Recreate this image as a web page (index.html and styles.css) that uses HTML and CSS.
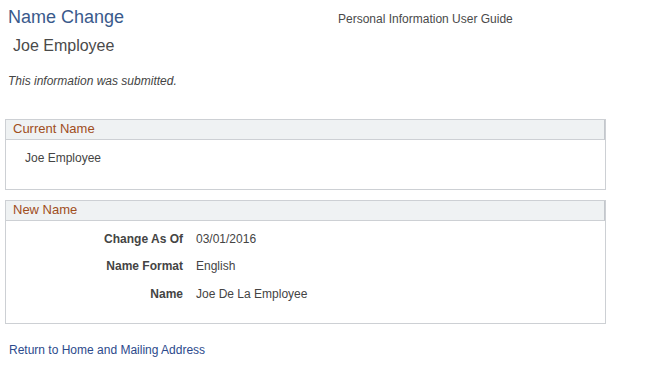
FILE: index.html
```html
<!DOCTYPE html>
<html>
<head>
    <title>Name Change</title>
    <meta charset="UTF-8">
    <link rel="stylesheet" href="styles.css">
</head>
<body>
    <div class="top">
        <h1 class="page-title">Name Change</h1>
        <span class="guide">Personal Information User Guide</span>
    </div>
    <div class="emp-name">Joe Employee</div>
    <p class="note">This information was submitted.</p>

    <div class="group current">
        <div class="group-head">Current Name</div>
        <div class="group-body">
            <div class="plain">Joe Employee</div>
        </div>
    </div>

    <div class="group new">
        <div class="group-head">New Name</div>
        <div class="group-body">
            <div class="row"><span class="lbl">Change As Of</span><span class="val">03/01/2016</span></div>
            <div class="row"><span class="lbl">Name Format</span><span class="val">English</span></div>
            <div class="row row-last"><span class="lbl">Name</span><span class="val">Joe De La Employee</span></div>
        </div>
    </div>

    <a class="back" href="#">Return to Home and Mailing Address</a>
</body>
</html>
```
FILE: styles.css
```css
body{
    margin: 0;
    padding: 0;
    font-family: "Liberation Sans", Arial, sans-serif;
    font-size: 12px;
    color: #444444;
    background: #ffffff;
}
.top{
    display: flex;
    align-items: baseline;
    padding: 7px 0 0 8px;
    height: 22px;
}
.page-title{
    margin: 0;
    font-size: 18px;
    font-weight: normal;
    color: #3a5a8c;
    width: 330px;
}
.guide{
    font-size: 12px;
    color: #4a4a4a;
}
.emp-name{
    font-size: 16px;
    color: #4a4a4a;
    padding: 8px 0 0 13px;
}
.note{
    margin: 19px 0 0 8px;
    font-style: italic;
}
.group{
    margin-left: 5px;
    width: 601px;
    border: 1px solid #cdd0d4;
    box-sizing: border-box;
}
.current{
    margin-top: 31px;
    height: 71px;
}
.new{
    margin-top: 10px;
    height: 124px;
}
.group-head{
    height: 19px;
    line-height: 18px;
    background: #eff2f3;
    border-bottom: 1px solid #cdd0d4;
    border-right: 1px solid #c3c7cc;
    color: #a04e1c;
    font-size: 13px;
    padding-left: 7px;
}
.plain{
    padding: 11px 0 0 19px;
}
.row{
    display: flex;
    align-items: center;
    height: 27px;
}
.group-body .row:first-child{
    margin-top: 4px;
}
.row-last{
    height: 29px;
}
.lbl{
    width: 177px;
    text-align: right;
    font-weight: bold;
}
.val{
    margin-left: 13px;
}
.back{
    display: inline-block;
    margin: 19px 0 0 9px;
    color: #2c4a8c;
    text-decoration: none;
}
```
